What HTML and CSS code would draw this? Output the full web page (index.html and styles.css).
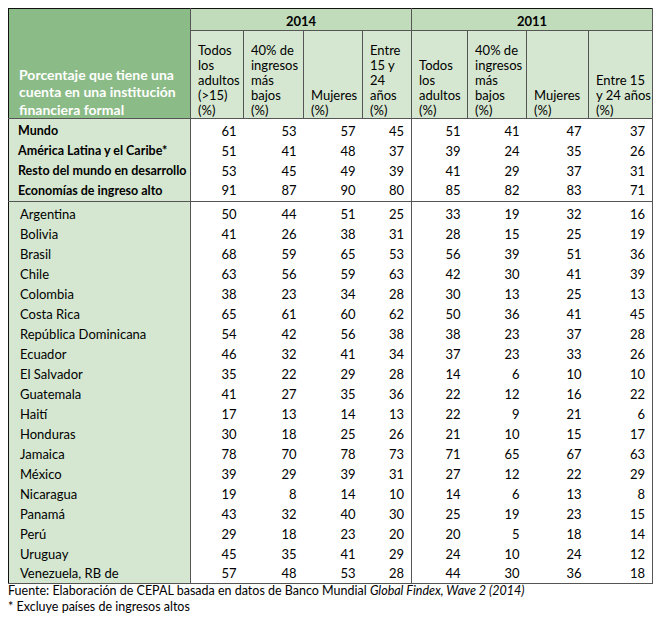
FILE: index.html
```html
<!DOCTYPE html>
<html lang="es">
<head>
<meta charset="utf-8">
<link rel="stylesheet" href="styles.css">
</head>
<body>
<table class="tbl">
  <colgroup>
    <col class="c-label">
    <col class="c1"><col class="c2"><col class="c3"><col class="c4">
    <col class="c5"><col class="c6"><col class="c7"><col class="c8">
  </colgroup>
  <thead>
    <tr class="years">
      <th class="corner" rowspan="2">Porcentaje que tiene una cuenta en una institución financiera formal</th>
      <th class="year" colspan="4">2014</th>
      <th class="year" colspan="4">2011</th>
    </tr>
    <tr class="subs">
      <th>Todos los adultos (&gt;15) (%)</th>
      <th>40% de ingresos más bajos (%)</th>
      <th>Mujeres (%)</th>
      <th class="gend">Entre 15 y 24 años (%)</th>
      <th>Todos los adultos (%)</th>
      <th>40% de ingresos más bajos (%)</th>
      <th>Mujeres (%)</th>
      <th class="wide">Entre 15 y 24 años (%)</th>
    </tr>
  </thead>
  <tbody class="agg">
    <tr class="first"><th>Mundo</th><td>61</td><td>53</td><td>57</td><td class="gend">45</td><td>51</td><td>41</td><td>47</td><td>37</td></tr>
    <tr><th>América Latina y el Caribe*</th><td>51</td><td>41</td><td>48</td><td class="gend">37</td><td>39</td><td>24</td><td>35</td><td>26</td></tr>
    <tr><th>Resto del mundo en desarrollo</th><td>53</td><td>45</td><td>49</td><td class="gend">39</td><td>41</td><td>29</td><td>37</td><td>31</td></tr>
    <tr class="last"><th>Economías de ingreso alto</th><td>91</td><td>87</td><td>90</td><td class="gend">80</td><td>85</td><td>82</td><td>83</td><td>71</td></tr>
  </tbody>
  <tbody class="countries">
    <tr class="first"><th>Argentina</th><td>50</td><td>44</td><td>51</td><td class="gend">25</td><td>33</td><td>19</td><td>32</td><td>16</td></tr>
    <tr><th>Bolivia</th><td>41</td><td>26</td><td>38</td><td class="gend">31</td><td>28</td><td>15</td><td>25</td><td>19</td></tr>
    <tr><th>Brasil</th><td>68</td><td>59</td><td>65</td><td class="gend">53</td><td>56</td><td>39</td><td>51</td><td>36</td></tr>
    <tr><th>Chile</th><td>63</td><td>56</td><td>59</td><td class="gend">63</td><td>42</td><td>30</td><td>41</td><td>39</td></tr>
    <tr><th>Colombia</th><td>38</td><td>23</td><td>34</td><td class="gend">28</td><td>30</td><td>13</td><td>25</td><td>13</td></tr>
    <tr><th>Costa Rica</th><td>65</td><td>61</td><td>60</td><td class="gend">62</td><td>50</td><td>36</td><td>41</td><td>45</td></tr>
    <tr><th>República Dominicana</th><td>54</td><td>42</td><td>56</td><td class="gend">38</td><td>38</td><td>23</td><td>37</td><td>28</td></tr>
    <tr><th>Ecuador</th><td>46</td><td>32</td><td>41</td><td class="gend">34</td><td>37</td><td>23</td><td>33</td><td>26</td></tr>
    <tr><th>El Salvador</th><td>35</td><td>22</td><td>29</td><td class="gend">28</td><td>14</td><td>6</td><td>10</td><td>10</td></tr>
    <tr><th>Guatemala</th><td>41</td><td>27</td><td>35</td><td class="gend">36</td><td>22</td><td>12</td><td>16</td><td>22</td></tr>
    <tr><th>Haití</th><td>17</td><td>13</td><td>14</td><td class="gend">13</td><td>22</td><td>9</td><td>21</td><td>6</td></tr>
    <tr><th>Honduras</th><td>30</td><td>18</td><td>25</td><td class="gend">26</td><td>21</td><td>10</td><td>15</td><td>17</td></tr>
    <tr><th>Jamaica</th><td>78</td><td>70</td><td>78</td><td class="gend">73</td><td>71</td><td>65</td><td>67</td><td>63</td></tr>
    <tr><th>México</th><td>39</td><td>29</td><td>39</td><td class="gend">31</td><td>27</td><td>12</td><td>22</td><td>29</td></tr>
    <tr><th>Nicaragua</th><td>19</td><td>8</td><td>14</td><td class="gend">10</td><td>14</td><td>6</td><td>13</td><td>8</td></tr>
    <tr><th>Panamá</th><td>43</td><td>32</td><td>40</td><td class="gend">30</td><td>25</td><td>19</td><td>23</td><td>15</td></tr>
    <tr><th>Perú</th><td>29</td><td>18</td><td>23</td><td class="gend">20</td><td>20</td><td>5</td><td>18</td><td>14</td></tr>
    <tr><th>Uruguay</th><td>45</td><td>35</td><td>41</td><td class="gend">29</td><td>24</td><td>10</td><td>24</td><td>12</td></tr>
    <tr class="last"><th>Venezuela, RB de</th><td>57</td><td>48</td><td>53</td><td class="gend">28</td><td>44</td><td>30</td><td>36</td><td>18</td></tr>
  </tbody>
</table>
<p class="note">Fuente: Elaboración de CEPAL basada en datos de Banco Mundial <em>Global Findex, Wave 2 (2014)</em></p>
<p class="note">* Excluye países de ingresos altos</p>
</body>
</html>
```
FILE: styles.css
```css
body {
  margin: 8px 8px;
  font-family: Lato, "Open Sans", sans-serif;
  font-size: 13px;
  color: #000;
  background: #fff;
}
.tbl {
  border-collapse: collapse;
  table-layout: fixed;
  width: 645px;
  border-top: 1px solid #111;
  border-left: 1px solid #111;
  border-right: 1px solid #555;
  border-bottom: 1px solid #555;
}
.c-label { width: 182px; }
.c1 { width: 53px; }
.c2 { width: 60px; }
.c3 { width: 59px; }
.c4 { width: 49px; }
.c5 { width: 56px; }
.c6 { width: 59px; }
.c7 { width: 62px; }
.c8 { width: 64px; }

th, td { padding: 0; }

.corner {
  background: #8bbb86;
  color: #fff;
  font-weight: bold;
  font-size: 14px;
  line-height: 17.5px;
  text-align: left;
  vertical-align: bottom;
  padding: 0 8px 0 10px;
  border-right: 1px solid #555;
  border-bottom: 1px solid #555;
}
.years { height: 22px; }
.year {
  background: #c0dcba;
  font-weight: bold;
  font-size: 13px;
  text-align: center;
  border-left: 1px solid #555;
  border-bottom: 1px solid #555;
  border-right: 1px solid #555;
  padding-top: 2px;
}
.subs { height: 88px; }
.subs th {
  background: #d5e7d0;
  font-weight: normal;
  text-align: left;
  vertical-align: bottom;
  line-height: 15px;
  padding: 0 3px 0 7px;
  border: 1px solid #555;
  border-top: none;
}
.subs th.wide { padding-right: 0; }

tbody th {
  background: #d5e7d0;
  text-align: left;
  font-weight: normal;
  padding-left: 11px;
  border-right: 1px solid #555;
  white-space: nowrap;
}
.agg th { font-weight: bold; font-size: 12.5px; padding-left: 9px; }
tbody tr { height: 20px; }
tbody td {
  text-align: right;
  padding-right: 7px;
}
tbody td.gend { border-right: 1px solid #555; }
.agg tr.first { height: 22px; }
.agg tr.first th, .agg tr.first td { padding-top: 2px; }
.agg tr.last { height: 21px; }
.agg tr.last th, .agg tr.last td { border-bottom: 1px solid #555; padding-bottom: 1px; }
.countries tr.first { height: 22px; }
.countries tr.first th, .countries tr.first td { padding-top: 2px; }

.note {
  margin: 0;
  font-size: 12.5px;
  line-height: 16px;
}
.note:first-of-type { margin-top: -1px; }
```
